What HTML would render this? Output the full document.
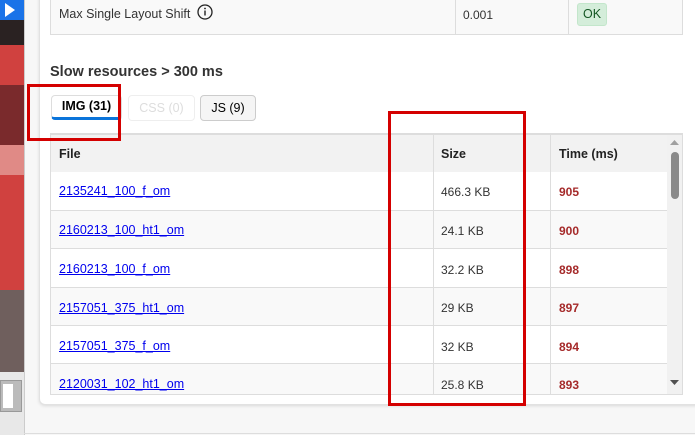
<!DOCTYPE html>
<html><head><style>
*{margin:0;padding:0;box-sizing:border-box}
body{width:695px;height:435px;overflow:hidden;background:#f7f7f7;font-family:"Liberation Sans",sans-serif;position:relative}
.abs{position:absolute}
.card{left:39px;top:-10px;width:670px;height:415px;background:#fff;border:1px solid #e2e2e2;border-radius:6px;box-shadow:0 1px 3px rgba(0,0,0,.12)}
.t1{left:50px;top:0;width:633px;height:35px;background:#f9f9f9;border:1px solid #ddd;border-top:none}
.lnk{color:#00e;text-decoration:underline;font-size:12.5px}
</style></head><body>
<div class="abs" style="left:0;top:0;width:24px;height:20px;background:#1a73e8"></div>
<svg class="abs" style="left:5px;top:3px" width="10" height="14"><polygon points="0,0 10,7 0,14" fill="#fff"/></svg>
<div class="abs" style="left:0;top:20px;width:24px;height:25px;background:#2a2222"></div>
<div class="abs" style="left:0;top:45px;width:24px;height:245px;background:#d0413f"></div>
<div class="abs" style="left:0;top:85px;width:24px;height:60px;background:#7a2a2c"></div>
<div class="abs" style="left:0;top:145px;width:24px;height:30px;background:#e08a86"></div>
<div class="abs" style="left:0;top:290px;width:24px;height:82px;background:#6f5f5d"></div>
<div class="abs" style="left:0;top:372px;width:24px;height:63px;background:#e8e8e8"></div>
<div class="abs" style="left:0;top:380px;width:22px;height:32px;background:#bbb;border:1px solid #999"></div>
<div class="abs" style="left:3px;top:384px;width:10px;height:24px;background:#fff"></div>
<div class="abs" style="left:24px;top:0;width:1px;height:435px;background:#ccc"></div>
<div class="abs" style="left:24px;top:433px;width:671px;height:1px;background:#ddd"></div>

<div class="abs card"></div>
<div class="abs t1"></div>
<div class="abs" style="left:455px;top:0;width:1px;height:34px;background:#ddd"></div>
<div class="abs" style="left:568px;top:0;width:1px;height:34px;background:#ddd"></div>
<div class="abs" style="left:59px;top:7px;font-size:12.5px;color:#333">Max Single Layout Shift</div>
<svg class="abs" style="left:197px;top:4px" width="16" height="16"><circle cx="8" cy="8" r="7" fill="none" stroke="#222" stroke-width="1.3"/><rect x="7.3" y="6.5" width="1.4" height="5" fill="#222"/><circle cx="8" cy="4.5" r="0.9" fill="#222"/></svg>
<div class="abs" style="left:463px;top:8px;font-size:12px;color:#333">0.001</div>
<div class="abs" style="left:577px;top:3px;width:30px;height:23px;background:#d4edda;border:1px solid #c3e6cb;border-radius:3px;color:#155724;font-size:12.5px;text-align:center;line-height:21px">OK</div>

<div class="abs" style="left:50px;top:64px;font-size:14.5px;font-weight:bold;color:#333">Slow resources &gt; 300 ms</div>
<div class="abs" style="left:51px;top:95px;width:71px;height:25px;border:1px solid #ddd;border-bottom:3px solid #0a74da;border-radius:4px;font-size:12.5px;font-weight:bold;color:#000;text-align:center;line-height:21px;background:#fff">IMG (31)</div>
<div class="abs" style="left:128px;top:95px;width:67px;height:26px;border:1px solid #eee;border-radius:4px;font-size:12.5px;color:#ddd;text-align:center;line-height:24px">CSS (0)</div>
<div class="abs" style="left:200px;top:95px;width:56px;height:26px;border:1px solid #ccc;border-radius:4px;font-size:12.5px;color:#000;text-align:center;line-height:24px;background:#f5f5f5">JS (9)</div>

<div class="abs" style="left:50px;top:133px;width:633px;height:262px;border:1px solid #ddd;border-top:2px solid #ddd;overflow:hidden">
 <div style="position:absolute;left:0;top:0;width:616px;height:38px;background:#f2f2f2;border-bottom:1px solid #ddd"></div>
</div>
<div class="abs" style="left:59px;top:147px;font-size:12.5px;font-weight:bold;color:#222">File</div>
<div class="abs" style="left:441px;top:147px;font-size:12.5px;font-weight:bold;color:#222">Size</div>
<div class="abs" style="left:559px;top:147px;font-size:12.5px;font-weight:bold;color:#222">Time (ms)</div>

<div class="abs" style="left:51px;top:172px;width:616px;height:39px;background:#fff;border-bottom:1px solid #ddd"></div>
<div class="abs" style="left:51px;top:211px;width:616px;height:38px;background:#f9f9f9;border-bottom:1px solid #ddd"></div>
<div class="abs" style="left:51px;top:249px;width:616px;height:39px;background:#fff;border-bottom:1px solid #ddd"></div>
<div class="abs" style="left:51px;top:288px;width:616px;height:38px;background:#f9f9f9;border-bottom:1px solid #ddd"></div>
<div class="abs" style="left:51px;top:326px;width:616px;height:38px;background:#fff;border-bottom:1px solid #ddd"></div>
<div class="abs" style="left:51px;top:364px;width:616px;height:30px;background:#f9f9f9"></div>
<div class="abs" style="left:433px;top:135px;width:1px;height:259px;background:#ddd"></div>
<div class="abs" style="left:550px;top:135px;width:1px;height:259px;background:#ddd"></div>

<a class="abs lnk" style="left:59px;top:184px">2135241_100_f_om</a>
<a class="abs lnk" style="left:59px;top:223px">2160213_100_ht1_om</a>
<a class="abs lnk" style="left:59px;top:262px">2160213_100_f_om</a>
<a class="abs lnk" style="left:59px;top:301px">2157051_375_ht1_om</a>
<a class="abs lnk" style="left:59px;top:339px">2157051_375_f_om</a>
<a class="abs lnk" style="left:59px;top:377px">2120031_102_ht1_om</a>
<div class="abs" style="left:441px;top:185px;font-size:12px;color:#333">466.3 KB</div>
<div class="abs" style="left:441px;top:224px;font-size:12px;color:#333">24.1 KB</div>
<div class="abs" style="left:441px;top:263px;font-size:12px;color:#333">32.2 KB</div>
<div class="abs" style="left:441px;top:301px;font-size:12px;color:#333">29 KB</div>
<div class="abs" style="left:441px;top:340px;font-size:12px;color:#333">32 KB</div>
<div class="abs" style="left:441px;top:378px;font-size:12px;color:#333">25.8 KB</div>
<div class="abs" style="left:559px;top:185px;font-size:12px;font-weight:bold;color:#a52a2a">905</div>
<div class="abs" style="left:559px;top:224px;font-size:12px;font-weight:bold;color:#a52a2a">900</div>
<div class="abs" style="left:559px;top:263px;font-size:12px;font-weight:bold;color:#a52a2a">898</div>
<div class="abs" style="left:559px;top:301px;font-size:12px;font-weight:bold;color:#a52a2a">897</div>
<div class="abs" style="left:559px;top:340px;font-size:12px;font-weight:bold;color:#a52a2a">894</div>
<div class="abs" style="left:559px;top:378px;font-size:12px;font-weight:bold;color:#a52a2a">893</div>

<div class="abs" style="left:667px;top:135px;width:15px;height:259px;background:#f1f1f1"></div>
<svg class="abs" style="left:670px;top:140px" width="9" height="6"><polygon points="0,5 4.5,0 9,5" fill="#a0a0a0"/></svg>
<div class="abs" style="left:671px;top:152px;width:8px;height:47px;background:#8a8a8a;border-radius:4px"></div>
<svg class="abs" style="left:670px;top:380px" width="9" height="6"><polygon points="0,0 4.5,5 9,0" fill="#505050"/></svg>

<div class="abs" style="left:27px;top:84px;width:94px;height:57px;border:3px solid #d40000"></div>
<div class="abs" style="left:388px;top:111px;width:138px;height:295px;border:3px solid #d40000"></div>
</body></html>
